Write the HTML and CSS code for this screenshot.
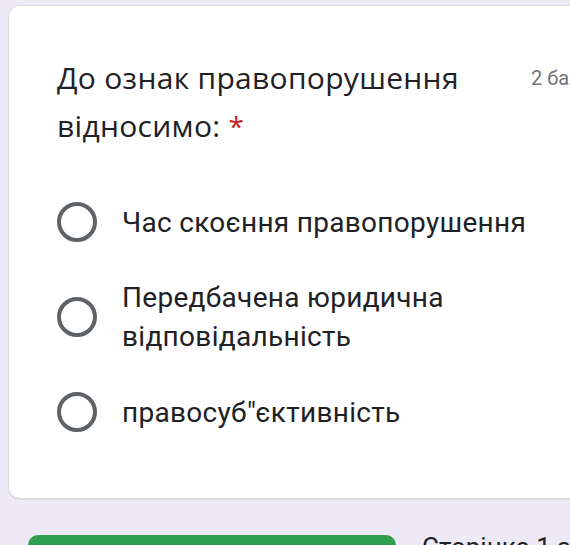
FILE: index.html
```html
<!DOCTYPE html>
<html lang="uk">
<head>
  <meta charset="UTF-8">
  <title>Питання</title>
  <link rel="stylesheet" href="styles.css">
</head>
<body>
  <div class="card">
    <div class="question-head">
      <div class="question-title">До ознак правопорушення відносимо: <span class="required">*</span></div>
      <div class="points">2 бали</div>
    </div>

    <div class="options">
      <label class="option">
        <span class="radio"></span>
        <span class="option-text">Час скоєння правопорушення</span>
      </label>
      <label class="option">
        <span class="radio"></span>
        <span class="option-text">Передбачена юридична відповідальність</span>
      </label>
      <label class="option">
        <span class="radio"></span>
        <span class="option-text">правосуб"єктивність</span>
      </label>
    </div>
  </div>

  <div class="footer">
    <div class="next-btn"></div>
    <div class="page-label">Сторінка 1 з 1</div>
  </div>
</body>
</html>
```

FILE: styles.css
```css
body {
  margin: 0;
  padding: 5px 0 0 8px;
  background-color: #ede9f6;
  font-family: Roboto, 'Noto Sans', sans-serif;
  color: #202124;
  overflow: hidden;
  height: 545px;
  box-sizing: border-box;
}

.card {
  width: 620px;
  background: #fff;
  border-radius: 12px;
  border: 1px solid #dcdbe2;
  border-bottom-width: 2px;
  padding: 48px 0 66px 48px;
  box-sizing: border-box;
}

.question-head {
  display: flex;
  gap: 20px;
}

.question-title {
  flex: none;
  width: 454px;
  font-family: 'Open Sans', sans-serif;
  font-size: 30px;
  line-height: 48px;
  letter-spacing: 0.3px;
}

.required {
  color: #c5221f;
  font-size: 28px;
}

.points {
  font-size: 20px;
  line-height: 48px;
  color: #70757a;
  white-space: nowrap;
}

.options {
  display: flex;
  flex-direction: column;
  gap: 36px;
  margin-top: 52px;
}

.option {
  display: flex;
  align-items: center;
  gap: 25px;
}

.radio {
  flex: none;
  width: 40px;
  height: 40px;
  border: 4px solid #5f6368;
  border-radius: 50%;
  box-sizing: border-box;
}

.option-text {
  font-size: 28px;
  line-height: 39px;
  letter-spacing: 0.3px;
  width: 440px;
}

.footer {
  display: flex;
  align-items: flex-start;
  gap: 26px;
  margin-top: 35px;
  padding-left: 20px;
}

.next-btn {
  flex: none;
  width: 368px;
  height: 50px;
  background: #2f9e4f;
  border-radius: 10px;
}

.page-label {
  font-size: 26px;
  line-height: 30px;
  margin-top: -3px;
  white-space: nowrap;
}
```
